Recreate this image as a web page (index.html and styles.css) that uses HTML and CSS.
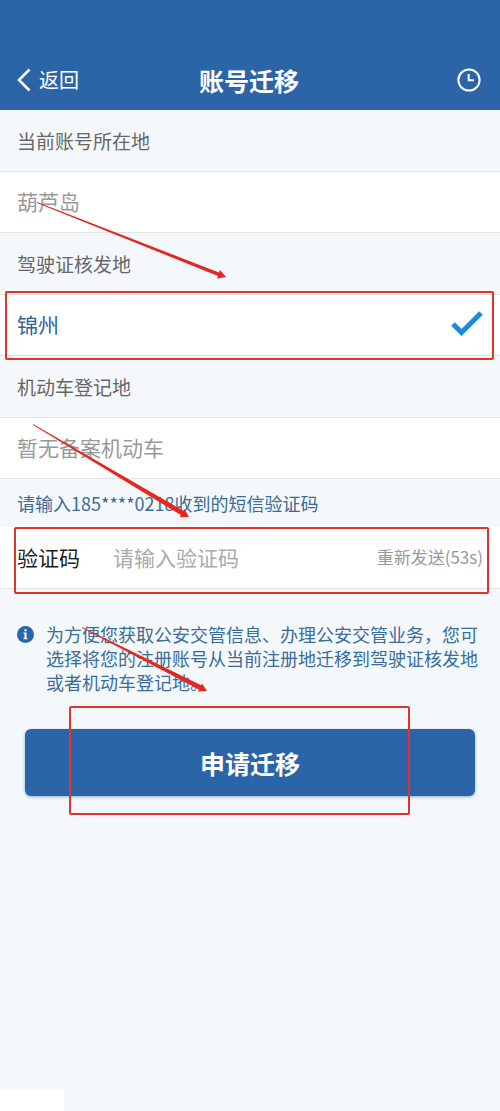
FILE: index.html
```html
<!DOCTYPE html>
<html lang="zh-CN">
<head>
  <meta charset="UTF-8" />
  <meta name="viewport" content="width=device-width, initial-scale=1.0" />
  <title>账号迁移</title>
  <link rel="stylesheet" href="styles.css">
</head>
<body>
  <div class="page">
    <header class="header">
      <button type="button" class="back">
        <svg width="14" height="24" viewBox="0 0 14 24"><path d="M12.500 1.500 2 12l10.500 10.500" fill="none" stroke="currentColor" stroke-width="2.600" /></svg>
        <span>返回</span>
      </button>
      <h1>账号迁移</h1>
      <button type="button" class="history" aria-label="记录">
        <svg width="24" height="24" viewBox="0 0 24 24" fill="none" stroke="currentColor" stroke-width="2"><circle cx="12" cy="12" r="10.600" /><path d="M11.700 6v6.300h5.300" /></svg>
      </button>
    </header>

    <form class="form">
      <h2 class="section-title">当前账号所在地</h2>
      <div class="row muted">
        葫芦岛
        <svg class="arrow arrow-city" width="190" height="78" viewBox="0 0 190 78"><path d="M0 0 182 70.500l1-2.500 6 7-9 1.500 1-2.500L0 1z" /></svg>
      </div>

      <h2 class="section-title">驾驶证核发地</h2>
      <label class="row city">
        锦州
        <input type="radio" class="radio" name="city" value="jinzhou" checked>
        <svg class="check" width="32" height="26" viewBox="0 0 32 26"><path d="M2 13 10.500 21.500 30 2" fill="none" stroke="#1b8bd8" stroke-width="5" /></svg>
        <span class="mark mark-city"></span>
      </label>

      <h2 class="section-title">机动车登记地</h2>
      <div class="row muted">
        暂无备案机动车
        <svg class="arrow arrow-code" width="158" height="95" viewBox="0 0 158 95"><path d="M0 0 150.400 86.800l1-1.800 4.600 8-9.200 0 1-1.900L0 1z" /></svg>
      </div>

      <p class="hint">请输入185****0218收到的短信验证码</p>
      <div class="row code">
        <label for="code">验证码</label>
        <input type="text" id="code" class="code-input" placeholder="请输入验证码">
        <button type="button" class="resend" disabled>重新发送(53s)</button>
        <span class="mark mark-code"></span>
      </div>

      <div class="note">
        <svg class="info" width="17" height="17" viewBox="0 0 17 17"><circle cx="8.500" cy="8.500" r="8.500" fill="#2b65a8" /><path d="M7.500 3.200h2v2h-2zM6.500 6.500h3v5.500h1v1.300h-4V12h1V7.800h-1z" fill="#fff" /></svg>
        <p>为方便您获取公安交管信息、办理公安交管业务，您可选择将您的注册账号从当前注册地迁移到驾驶证核发地或者机动车登记地。</p>
        <svg class="arrow arrow-submit" width="126" height="66" viewBox="0 0 126 66"><path d="M0 0 119.200 58.200l.8-1.800 5 7.600-9 .4.900-1.800L0 1z" /></svg>
      </div>

      <div class="actions">
        <button type="submit" class="submit">申请迁移</button>
        <span class="mark mark-submit"></span>
      </div>
    </form>
    <div class="corner"></div>
  </div>
</body>
</html>
```
FILE: styles.css
```css
* {
  box-sizing: border-box;
}

body {
  margin: 0;
  background: #f4f8fa;
  font-family: "Noto Sans CJK SC", sans-serif;
  color: #333;
}

button,
input {
  font-family: inherit;
  border: none;
  background: none;
  padding: 0;
  margin: 0;
}

svg {
  display: block;
  flex-shrink: 0;
}

h1,
h2,
p {
  margin: 0;
}

.page {
  position: relative;
  min-height: 100vh;
}

/* header */
.header {
  display: grid;
  grid-template-columns: 1fr auto 1fr;
  align-items: center;
  height: 110px;
  padding: 50px 19px 0 17px;
  background: #2b65a8;
  color: #fff;
}

.header h1 {
  font-size: 25px;
  line-height: 36px;
  font-weight: 700;
}

.back {
  display: flex;
  align-items: center;
  gap: 8px;
  color: #fff;
  font-size: 20px;
  line-height: 30px;
}

.history {
  justify-self: end;
  color: #fff;
}

/* rows */
.section-title {
  padding: 0 17px;
  font-size: 19px;
  line-height: 61px;
  font-weight: 400;
  color: #666;
}

.row {
  position: relative;
  display: flex;
  align-items: center;
  height: 62px;
  padding: 0 17px 2px;
  background: #fff;
  border-top: 1px solid #dfe3e6;
  border-bottom: 1px solid #dfe3e6;
  font-size: 21px;
}

.muted {
  color: #999;
}

.city {
  justify-content: space-between;
  color: #2f6297;
}

.radio {
  position: absolute;
  appearance: none;
}

.hint {
  padding: 0 17px;
  font-size: 18px;
  line-height: 48px;
  color: #3a6c99;
}

.code {
  border-top: none;
}

.code label {
  width: 96px;
  flex-shrink: 0;
  color: #222;
}

.code-input {
  flex: 1;
  min-width: 0;
  height: 40px;
  font-size: 21px;
  outline: none;
}

.code-input::placeholder {
  color: #aaa;
}

.resend {
  font-size: 17px;
  color: #999;
}

.note {
  position: relative;
  display: flex;
  gap: 12px;
  padding: 33px 17px 0;
  font-size: 18px;
  line-height: 24px;
  color: #3a6c99;
}

.info {
  margin-top: 4px;
}

.actions {
  position: relative;
  padding: 35px 25px;
}

.submit {
  display: block;
  width: 100%;
  height: 67px;
  border-radius: 6px;
  background: #2b65a8;
  box-shadow: 0 1px 3px rgba(43, 101, 168, 0.5);
  color: #fff;
  font-size: 25px;
  font-weight: 700;
}

/* red marks */
.mark {
  position: absolute;
  border: 2px solid #e0332a;
  border-radius: 2px;
  pointer-events: none;
}

.mark-city {
  inset: -4px 6px -5px 5px;
}

.mark-code {
  inset: 0 11px -6px 14px;
}

.mark-submit {
  inset: 12px 90px 16px 69px;
}

.arrow {
  position: absolute;
  z-index: 1;
  fill: #e5281f;
  pointer-events: none;
}

.arrow-city {
  top: 30px;
  left: 37px;
}

.arrow-code {
  top: 6px;
  left: 33px;
}

.arrow-submit {
  top: 38px;
  left: 82px;
}

.corner {
  position: absolute;
  left: 0;
  bottom: 0;
  width: 64px;
  height: 22px;
  background: #fff;
}
```
